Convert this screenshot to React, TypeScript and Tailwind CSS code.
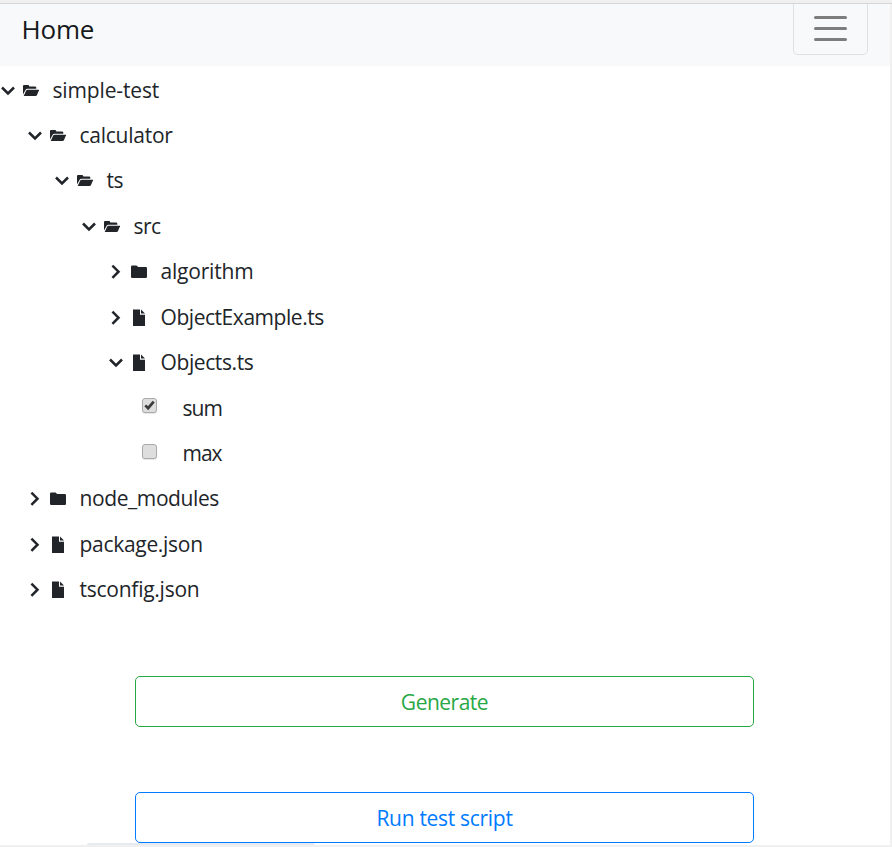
import React from "react";

type Kind = "open" | "folder" | "file";

interface Node {
  label: string;
  indent: string;
  expanded?: boolean;
  kind?: Kind;
  checked?: boolean;
  track: string;
}

const NODES: Node[] = [
  { label: "simple-test", indent: "pl-0", expanded: true, kind: "open", track: "tracking-[-0.15px]" },
  { label: "calculator", indent: "pl-[27px]", expanded: true, kind: "open", track: "tracking-[-0.25px]" },
  { label: "ts", indent: "pl-[54px]", expanded: true, kind: "open", track: "tracking-[-0.5px]" },
  { label: "src", indent: "pl-[81px]", expanded: true, kind: "open", track: "tracking-[-0.5px]" },
  { label: "algorithm", indent: "pl-[108px]", kind: "folder", track: "tracking-[-0.2px]" },
  { label: "ObjectExample.ts", indent: "pl-[108px]", kind: "file", track: "tracking-[-0.45px]" },
  { label: "Objects.ts", indent: "pl-[108px]", expanded: true, kind: "file", track: "tracking-[-0.4px]" },
  { label: "sum", indent: "pl-[142px]", checked: true, track: "tracking-[-1px]" },
  { label: "max", indent: "pl-[142px]", checked: false, track: "tracking-[-1px]" },
  { label: "node_modules", indent: "pl-[27px]", kind: "folder", track: "tracking-[-0.4px]" },
  { label: "package.json", indent: "pl-[27px]", kind: "file", track: "tracking-[-0.3px]" },
  { label: "tsconfig.json", indent: "pl-[27px]", kind: "file", track: "tracking-[-0.25px]" },
];

function Chevron({ expanded }: { expanded?: boolean }) {
  return (
    <svg className="h-4 w-4 shrink-0" viewBox="0 0 16 16" fill="none" stroke="#212529" strokeWidth="2.5">
      <path d={expanded ? "M2 5.5 L8 11.5 L14 5.5" : "M4.4 2.6 L10.5 8.7 L4.4 14.8"} />
    </svg>
  );
}

function NodeIcon({ kind }: { kind: Kind }) {
  return (
    <svg className="ml-[7px] h-[18px] w-4 shrink-0" viewBox="0 0 16 18" fill="#212529">
      {kind === "open" && (
        <>
          <path d="M0 13.5V5Q0 4 1 4H5Q6 4 6.4 5.4H12Q13.3 5.4 13.3 6.6V7.8H4.6Q3.2 7.8 2.5 9Z" />
          <path d="M4.8 8.8H16.2L13.9 14.2Q13.5 15 12.6 15H.7L3.1 9.8Q3.6 8.8 4.8 8.8Z" />
        </>
      )}
      {kind === "folder" && (
        <path d="M1.2 3.5H5.5L7.2 5.1H14.8Q16 5.1 16 6.3V14.8Q16 16 14.8 16H1.2Q0 16 0 14.8V4.7Q0 3.5 1.2 3.5Z" />
      )}
      {kind === "file" && <path d="M2 1.5H9V6.7H14V18H2ZM10 1.5L14 5.5H10Z" />}
    </svg>
  );
}

function Checkbox({ checked }: { checked?: boolean }) {
  return (
    <span className="-mt-[4px] flex h-[15px] w-[15px] shrink-0 items-center justify-center rounded-[3px] border border-[#aaaaaa] bg-[#dedede] shadow-[0_1px_1px_#e6e6e6]">
      {checked && (
        <svg className="h-[11px] w-[11px]" viewBox="0 0 11 11" fill="none" stroke="#3b3b3b" strokeWidth="2.7">
          <path d="M1.3 5.4L4.1 8.2L9.7 1.6" />
        </svg>
      )}
    </span>
  );
}

export default function App() {
  return (
    <div className="flex h-[847px] w-[892px] flex-col overflow-hidden bg-white font-['Open_Sans','Noto_Sans',sans-serif] text-[#212529]">
      <div className="h-1 shrink-0 border-b border-[#d5d6d7] bg-[#f0f0f0]" />
      <div className="flex min-h-0 flex-1 border-r-2 border-[#f0f0f0]">
        <div className="flex min-w-0 flex-1 flex-col">
          <nav className="flex h-[62px] shrink-0 items-start justify-between bg-[#f8f9fa] pl-[21.5px] pr-[22px]">
            <a className="mt-[5px] text-[26px] leading-10 tracking-[-0.2px] text-[#17191b]">Home</a>
            <button className="flex h-[51px] w-[75px] flex-col items-center gap-2 rounded-b-[5px] border border-t-0 border-[#dfe0e1] pt-3">
              <span className="h-[3px] w-[33px] rounded-full bg-[#7d7d7e]" />
              <span className="h-[3px] w-[33px] rounded-full bg-[#7d7d7e]" />
              <span className="h-[3px] w-[33px] rounded-full bg-[#7d7d7e]" />
            </button>
          </nav>
          <ul className="shrink-0 pb-[0.17px] pt-[0.83px]">
            {NODES.map((n) => (
              <li key={n.label} className={`flex h-[45.45px] items-center ${n.indent}`}>
                {n.kind ? (
                  <>
                    <Chevron expanded={n.expanded} />
                    <NodeIcon kind={n.kind} />
                  </>
                ) : (
                  <Checkbox checked={n.checked} />
                )}
                <span className={`${n.kind ? "ml-[13.5px]" : "ml-[25.5px]"} whitespace-nowrap text-[21px] leading-8 ${n.track}`}>
                  {n.label}
                </span>
              </li>
            ))}
          </ul>
          <div className="ml-[135px] mt-[64px] flex w-[619px] flex-col gap-[65px]">
            <button className="h-[51px] rounded-[5px] border border-[#28a745] pt-0.5 text-[21px] tracking-[-0.5px] text-[#28a745]">Generate</button>
            <button className="h-[51px] rounded-[5px] border border-[#007bff] pt-0.5 text-[21px] tracking-[-0.3px] text-[#007bff]">Run test script</button>
          </div>
          <div className="ml-[87px] h-0.5 w-[228px] shrink-0 rounded-t-sm bg-[#e6eaf1]" />
        </div>
      </div>
      <div className="h-0.5 shrink-0 bg-[#f0f0f0]" />
    </div>
  );
}
